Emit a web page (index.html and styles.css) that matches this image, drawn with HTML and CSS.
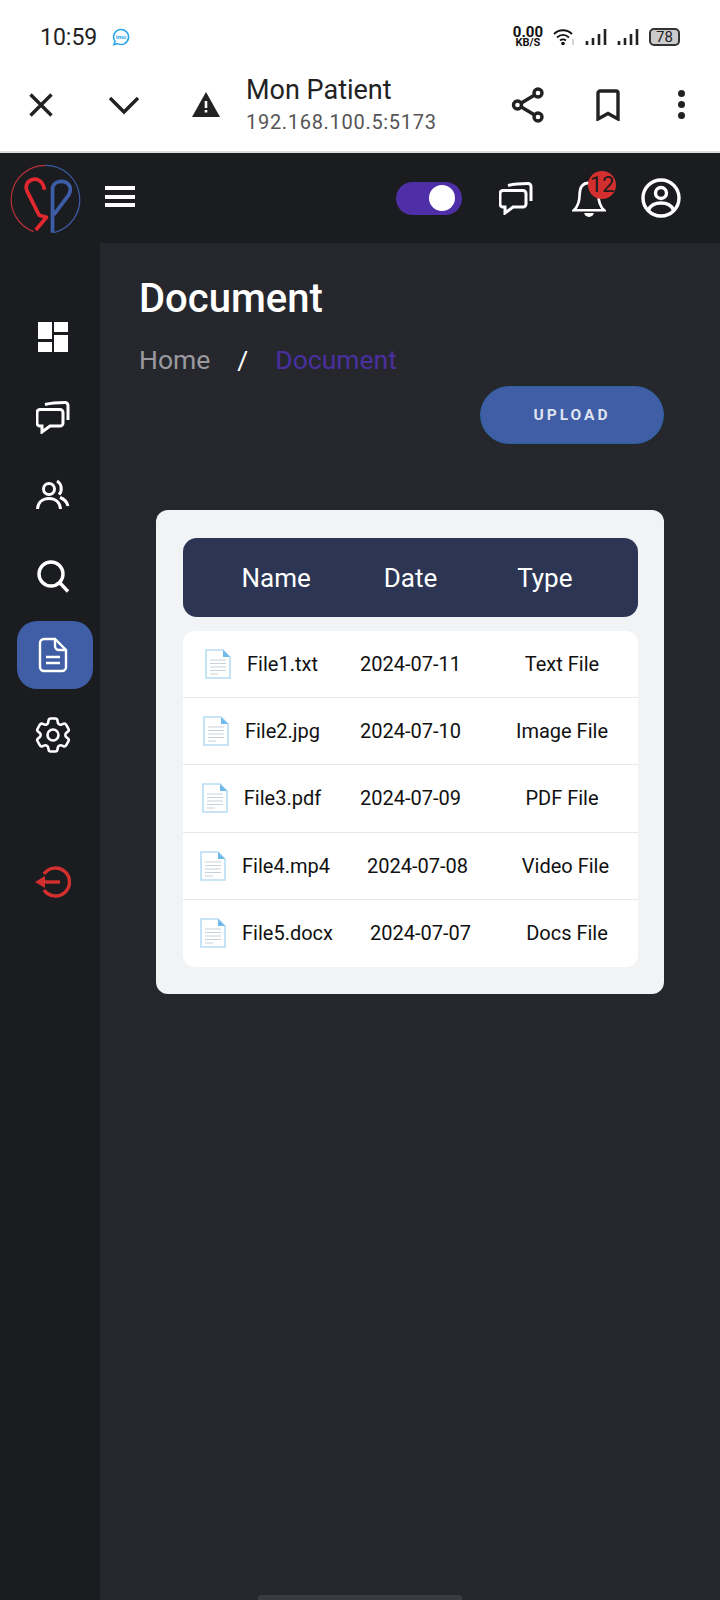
FILE: index.html
```html
<!DOCTYPE html>
<html lang="en">
<head>
  <meta charset="UTF-8" />
  <title>Mon Patient</title>
  <link rel="stylesheet" href="styles.css">
</head>
<body>

  <svg class="defs" width="0" height="0">
    <symbol id="chat" viewBox="0 0 34 34">
      <path d="M4 9.500H24a3 3 0 0 1 3 3V23a3 3 0 0 1-3 3H14L6 32V26H4a3 3 0 0 1-3-3V12.500a3 3 0 0 1 3-3Z" fill="none" stroke="currentColor" stroke-width="3"/>
      <path d="M9 4.500 C15 3 22 2.500 29 2.500a3 3 0 0 1 3 3V20" fill="none" stroke="currentColor" stroke-width="3"/>
    </symbol>
    <symbol id="fileicon" viewBox="0 0 26 30">
      <path d="M1 1H18L25 8V29H1Z" fill="#fff" stroke="#b6dcf4" stroke-width="1.600"/>
      <path d="M18 1 25 8H18Z" fill="#6db9ea"/>
      <path d="M5 11H21M5 14.500H21M5 18H21M5 21.500H21" stroke="#c9d1d8" stroke-width="1.200"/>
      <path d="M5 25H13" stroke="#d5dade" stroke-width="1.200"/>
    </symbol>
  </svg>

  <!-- phone status bar -->
  <div class="status-bar">
    <span class="clock">10:59</span>
    <svg class="imo" width="18" height="18" viewBox="0 0 18 18">
      <path d="M9 1.500a7.500 7.500 0 1 1-3.500 14.100L2 16.500l1-3.200A7.500 7.500 0 0 1 9 1.500Z" fill="none" stroke="#2ba6ea" stroke-width="1.600"/>
      <text x="9" y="11" text-anchor="middle" class="imo-text">imo</text>
    </svg>
    <div class="status-right">
      <div class="speed"><span class="speed-num">0.00</span><span class="speed-unit">KB/S</span></div>
      <svg width="22" height="20" viewBox="0 0 22 20">
        <path d="M1 7C6 2 14 2 19 7M4 10.500C8 7 12 7 16 10.500M7 13.500C9 12 11 12 13 13.500" fill="none" stroke="#111" stroke-width="1.800"/>
        <circle cx="10" cy="16.500" r="1.800" fill="#111"/>
        <path d="M20 12v6" stroke="#ccc" stroke-width="1.600"/>
      </svg>
      <svg width="22" height="18" viewBox="0 0 22 18">
        <path d="M2 13v4M8 10v7M14 6v11M20 1v16" stroke="#222" stroke-width="2.600"/>
      </svg>
      <svg width="22" height="18" viewBox="0 0 22 18">
        <path d="M2 13v4M8 10v7M14 6v11M20 1v16" stroke="#222" stroke-width="2.600"/>
      </svg>
      <div class="battery"><span>78</span></div>
    </div>
  </div>

  <!-- custom tab toolbar -->
  <div class="browser-bar">
    <svg class="b-close" width="26" height="26" viewBox="0 0 26 26"><path d="M2.500 2.500 23.500 23.500M23.500 2.500 2.500 23.500" stroke="#222" stroke-width="3.400"/></svg>
    <svg class="b-chevron" width="32" height="20" viewBox="0 0 32 20"><path d="M2 3 16 17 30 3" fill="none" stroke="#222" stroke-width="3.400"/></svg>
    <svg class="b-warn" width="28" height="25" viewBox="0 0 28 25"><path d="M14 0 28 25H0Z" fill="#222"/><path d="M12.700 9h2.600v7h-2.600ZM12.700 18h2.600v2.600h-2.600Z" fill="#fff"/></svg>
    <div class="b-title">
      <div class="b-name">Mon Patient</div>
      <div class="b-url">192.168.100.5:5173</div>
    </div>
    <svg class="b-share" width="34" height="36" viewBox="0 0 34 36">
      <path d="M7 18 27 6M7 18 27 30" stroke="#222" stroke-width="3.400"/>
      <circle cx="6.500" cy="18" r="4" fill="#fff" stroke="#222" stroke-width="3.400"/>
      <circle cx="27" cy="6" r="4" fill="#fff" stroke="#222" stroke-width="3.400"/>
      <circle cx="27" cy="30" r="4" fill="#fff" stroke="#222" stroke-width="3.400"/>
    </svg>
    <svg class="b-mark" width="26" height="32" viewBox="0 0 26 32"><path d="M3 30V4a2 2 0 0 1 2-2H21a2 2 0 0 1 2 2V30L13 24.500Z" fill="none" stroke="#222" stroke-width="3.400"/></svg>
    <div class="b-dots"><i></i><i></i><i></i></div>
  </div>

  <div class="app">
    <header class="topbar">
      <svg class="logo" width="77" height="77" viewBox="20 35 230 230">
        <path d="M135 45A102 102 0 0 0 100 243" fill="none" stroke="#b5323a" stroke-width="3.500"/>
        <path d="M135 45A102 102 0 0 1 160 246" fill="none" stroke="#3d5da8" stroke-width="3.500"/>
        <path d="M132 118C128 92 110 82 94 88 78 94 74 108 80 122L116 194 138 200 106 238" fill="none" stroke="#e0282e" stroke-width="11" stroke-linejoin="round"/>
        <path d="M156 246V114C158 96 180 88 196 96 212 104 212 122 204 134L160 192" fill="none" stroke="#3d5da8" stroke-width="11" stroke-linejoin="round"/>
      </svg>
      <div class="burger"><i></i><i></i><i></i></div>
      <div class="top-actions">
        <div class="toggle"><span class="knob"></span></div>
        <svg class="top-chat" width="34" height="34"><use href="#chat"/></svg>
        <div class="bell">
          <svg width="34" height="42" viewBox="0 0 36 42">
            <path d="M18 5C10 5 8 12 8 18 8 26 6 30 2 34H34C30 30 28 26 28 18 28 12 26 5 18 5Z" fill="none" stroke="#fff" stroke-width="2.800"/>
            <path d="M13 37a5 4 0 0 0 10 0Z" fill="#fff"/>
          </svg>
          <span class="badge">12</span>
        </div>
        <svg class="user" width="40" height="40" viewBox="0 0 40 40">
          <circle cx="20" cy="20" r="18" fill="none" stroke="#fff" stroke-width="3.400"/>
          <circle cx="20" cy="15" r="5.500" fill="none" stroke="#fff" stroke-width="3.400"/>
          <path d="M7.500 32C10 26 15 25 20 25S30 26 32.500 32" fill="none" stroke="#fff" stroke-width="3.400"/>
        </svg>
      </div>
    </header>

    <div class="main">
      <nav class="sidebar">
        <a class="nav-item">
          <svg width="30" height="30" viewBox="0 0 30 30" fill="#fff">
            <rect width="14" height="17"/><rect x="16" width="14" height="10"/>
            <rect y="20" width="14" height="10"/><rect x="16" y="13" width="14" height="17"/>
          </svg>
        </a>
        <a class="nav-item"><svg width="34" height="34"><use href="#chat"/></svg></a>
        <a class="nav-item">
          <svg width="34" height="34" viewBox="0 0 34 34" fill="none" stroke="#fff" stroke-width="3">
            <circle cx="13" cy="10" r="5.500"/>
            <path d="M1.500 30C2 23 7 19.500 13 19.500S24 23 24.500 30"/>
            <path d="M21 2C26 5 26.500 12 23 15.500M24 18.500C28 20 31 23 32 27"/>
          </svg>
        </a>
        <a class="nav-item">
          <svg width="34" height="36" viewBox="0 0 34 36" fill="none" stroke="#fff" stroke-width="3.400">
            <circle cx="15" cy="16" r="12"/><path d="M24 25 32 33.500"/>
          </svg>
        </a>
        <a class="nav-item active">
          <svg width="30" height="36" viewBox="0 0 30 36" fill="none" stroke="#fff" stroke-width="2.400">
            <path d="M6 2H17L28 13V30a4 4 0 0 1-4 4H6a4 4 0 0 1-4-4V6a4 4 0 0 1 4-4Z"/>
            <path d="M17 2V9a4 4 0 0 0 4 4H28M8 20H22M8 26H22"/>
          </svg>
        </a>
        <a class="nav-item">
          <svg width="44" height="44" viewBox="0 0 24 24" fill="none" stroke="#fff" stroke-width="1.400">
            <path d="M9.594 3.940c.09-.542.56-.94 1.110-.94h2.593c.55 0 1.020.398 1.110.94l.213 1.281c.063.374.313.686.645.870.074.040.147.083.22.127.325.196.72.257 1.075.124l1.217-.456a1.125 1.125 0 0 1 1.370.49l1.296 2.247a1.125 1.125 0 0 1-.26 1.431l-1.003.827c-.293.241-.438.613-.43.992a7.723 7.723 0 0 1 0 .255c-.008.378.137.75.43.991l1.004.827c.424.35.534.955.26 1.430l-1.298 2.247a1.125 1.125 0 0 1-1.369.491l-1.217-.456c-.355-.133-.75-.072-1.076.124a6.470 6.470 0 0 1-.22.128c-.331.183-.581.495-.644.869l-.213 1.281c-.09.543-.56.94-1.110.94h-2.594c-.55 0-1.019-.398-1.110-.94l-.213-1.281c-.062-.374-.312-.686-.644-.87a6.520 6.520 0 0 1-.22-.127c-.325-.196-.72-.257-1.076-.124l-1.217.456a1.125 1.125 0 0 1-1.369-.49l-1.297-2.247a1.125 1.125 0 0 1 .26-1.431l1.004-.827c.292-.24.437-.613.43-.991a6.932 6.932 0 0 1 0-.255c.007-.38-.138-.751-.43-.992l-1.004-.827a1.125 1.125 0 0 1-.26-1.430l1.297-2.247a1.125 1.125 0 0 1 1.370-.491l1.216.456c.356.133.751.072 1.076-.124.072-.044.146-.086.22-.128.332-.183.582-.495.644-.869l.214-1.280Z"/>
            <circle cx="12" cy="12" r="3"/>
          </svg>
        </a>
        <a class="nav-item logout">
          <svg width="36" height="32" viewBox="0 0 36 32" fill="none" stroke="#d32f2f" stroke-width="3.400">
            <path d="M9 8A14 14 0 1 1 9 24"/>
            <path d="M8 16H25"/>
            <path d="M0 16 10 10V22Z" fill="#d32f2f" stroke="none"/>
          </svg>
        </a>
      </nav>

      <section class="content">
        <h1 class="page-title">Document</h1>
        <div class="crumbs">
          <span class="crumb-home">Home</span>
          <span class="crumb-sep">/</span>
          <span class="crumb-here">Document</span>
        </div>
        <div class="upload-row"><button type="button" class="upload">UPLOAD</button></div>

        <div class="card">
          <div class="table-head">
            <span>Name</span><span>Date</span><span>Type</span>
          </div>
          <div class="file-list">
            <div class="file-row">
              <div class="file-name"><svg width="26" height="30"><use href="#fileicon"/></svg>File1.txt</div>
              <div class="file-date">2024-07-11</div>
              <div class="file-type">Text File</div>
            </div>
            <div class="file-row">
              <div class="file-name"><svg width="26" height="30"><use href="#fileicon"/></svg>File2.jpg</div>
              <div class="file-date">2024-07-10</div>
              <div class="file-type">Image File</div>
            </div>
            <div class="file-row">
              <div class="file-name"><svg width="26" height="30"><use href="#fileicon"/></svg>File3.pdf</div>
              <div class="file-date">2024-07-09</div>
              <div class="file-type">PDF File</div>
            </div>
            <div class="file-row">
              <div class="file-name"><svg width="26" height="30"><use href="#fileicon"/></svg>File4.mp4</div>
              <div class="file-date">2024-07-08</div>
              <div class="file-type">Video File</div>
            </div>
            <div class="file-row">
              <div class="file-name"><svg width="26" height="30"><use href="#fileicon"/></svg>File5.docx</div>
              <div class="file-date">2024-07-07</div>
              <div class="file-type">Docs File</div>
            </div>
          </div>
        </div>
      </section>
    </div>
  </div>

  <div class="gesture-bar"></div>

</body>
</html>
```

FILE: styles.css
```css
* {
  box-sizing: border-box;
}
html, body {
  margin: 0;
  height: 1600px;
  overflow: hidden;
}
body {
  font-family: Roboto, "Liberation Sans", sans-serif;
  background: #26272d;
  display: flex;
  flex-direction: column;
  position: relative;
}
svg {
  display: block;
  flex: none;
}
.defs {
  position: absolute;
}

/* status bar */
.status-bar {
  height: 62px;
  background: #fff;
  display: flex;
  align-items: center;
  padding: 12px 40px 0 40px;
}
.clock {
  font-size: 23px;
  color: #222;
}
.imo {
  margin-left: 15px;
}
.imo-text {
  font-size: 6px;
  font-weight: 700;
  fill: #2ba6ea;
}
.status-right {
  margin-left: auto;
  display: flex;
  align-items: center;
  gap: 10px;
}
.speed {
  display: flex;
  flex-direction: column;
  align-items: center;
  color: #111;
  font-weight: 700;
}
.speed-num {
  font-size: 15px;
  line-height: 12px;
}
.speed-unit {
  font-size: 11px;
  line-height: 10px;
}
.battery {
  width: 31px;
  height: 18px;
  border: 2px solid #333;
  border-radius: 5px;
  background: #ccc;
  color: #222;
  font-size: 15px;
  line-height: 14px;
  text-align: center;
}

/* browser toolbar */
.browser-bar {
  height: 91px;
  background: #fff;
  border-bottom: 2px solid #dcdcdc;
  display: flex;
  align-items: center;
  padding: 0 0 4px 28px;
}
.b-chevron {
  margin-left: 54px;
}
.b-warn {
  margin-left: 52px;
}
.b-title {
  margin-left: 26px;
  width: 265px;
}
.b-name {
  font-size: 27px;
  line-height: 35px;
  color: #222;
}
.b-url {
  font-size: 20px;
  line-height: 28px;
  color: #555;
  letter-spacing: 0.7px;
}
.b-mark {
  margin-left: 50px;
}
.b-dots {
  margin-left: 57px;
  display: flex;
  flex-direction: column;
  gap: 4px;
}
.b-dots i {
  width: 7px;
  height: 7px;
  border-radius: 50%;
  background: #222;
}

/* app header */
.app {
  flex: 1;
  display: flex;
  flex-direction: column;
  min-height: 0;
}
.topbar {
  height: 90px;
  background: #1b1c20;
  display: flex;
  align-items: center;
  padding-left: 7px;
}
.logo {
  margin-top: 4px;
}
.burger {
  margin-left: 21px;
  display: flex;
  flex-direction: column;
  gap: 4.5px;
  margin-top: -3px;
}
.burger i {
  width: 30px;
  height: 4px;
  background: #fff;
}
.top-actions {
  margin-left: auto;
  padding-right: 39px;
  display: flex;
  align-items: center;
}
.toggle {
  width: 66px;
  height: 33px;
  border-radius: 17px;
  background: #4f2fa8;
  display: flex;
  align-items: center;
  justify-content: flex-end;
  padding-right: 7px;
}
.knob {
  width: 26px;
  height: 26px;
  border-radius: 50%;
  background: #fff;
}
.top-chat {
  margin-left: 37px;
  color: #fff;
}
.bell {
  margin-left: 39px;
  position: relative;
}
.badge {
  position: absolute;
  left: 16px;
  top: -6px;
  width: 28px;
  height: 28px;
  border-radius: 50%;
  background: #d32f2f;
  color: #1b1c20;
  font-size: 22px;
  line-height: 28px;
  text-align: center;
}
.user {
  margin-left: 35px;
}

/* sidebar */
.main {
  flex: 1;
  display: flex;
  min-height: 0;
}
.sidebar {
  width: 100px;
  background: #1b1c20;
  padding: 60px 7px 0 17px;
  display: flex;
  flex-direction: column;
  gap: 11.5px;
}
.nav-item {
  height: 68px;
  border-radius: 20px;
  padding-right: 4px;
  display: flex;
  align-items: center;
  justify-content: center;
  color: #fff;
}
.nav-item.active {
  background: #3f5ea5;
}
.nav-item.logout {
  margin-top: 68px;
}

/* content */
.content {
  flex: 1;
  padding: 32px 56px 0 39px;
}
.page-title {
  margin: 0;
  font-size: 40px;
  line-height: 48px;
  font-weight: 500;
  color: #fff;
}
.crumbs {
  margin-top: 20px;
  display: flex;
  font-size: 26.5px;
  line-height: 34px;
}
.crumb-home {
  color: #9a9a9e;
}
.crumb-sep {
  color: #fff;
  margin: 0 27px;
}
.crumb-here {
  color: #4a2fa0;
}
.upload-row {
  margin-top: 9px;
  display: flex;
  justify-content: flex-end;
}
.upload {
  width: 184px;
  height: 58px;
  border-radius: 29px;
  border: 1px solid #2b5f9e;
  background: #3f5ea5;
  color: #dfe3f0;
  font-family: Roboto, sans-serif;
  font-size: 15.5px;
  font-weight: 700;
  letter-spacing: 3px;
}
.card {
  margin: 66px 0 0 17px;
  background: #f2f3f5;
  border-radius: 12px;
  padding: 28px 26px 27px 27px;
}
.table-head {
  height: 79px;
  background: #2c3654;
  border-radius: 14px;
  padding: 0 26px;
  display: grid;
  grid-template-columns: 1fr 1fr 1fr;
  align-items: center;
  text-align: center;
  color: #fff;
  font-size: 26px;
}
.file-list {
  margin-top: 14px;
  background: #fff;
  border-radius: 12px;
}
.file-row {
  height: 67.2px;
  display: flex;
  align-items: center;
  color: #111;
  font-size: 20px;
  border-bottom: 1px solid #e6e8ea;
}
.file-row:last-child {
  border-bottom: none;
}
.file-name {
  min-width: 155px;
  padding: 0 15px 0 17px;
  display: flex;
  align-items: center;
  justify-content: center;
  gap: 16px;
  white-space: nowrap;
}
.file-date {
  flex: 0 0 145px;
  text-align: center;
}
.file-type {
  flex: 1;
  padding-left: 3px;
  text-align: center;
}

.gesture-bar {
  position: absolute;
  left: 258px;
  bottom: 0;
  width: 204px;
  height: 5px;
  border-radius: 3px 3px 0 0;
  background: #3a3b40;
}
```
